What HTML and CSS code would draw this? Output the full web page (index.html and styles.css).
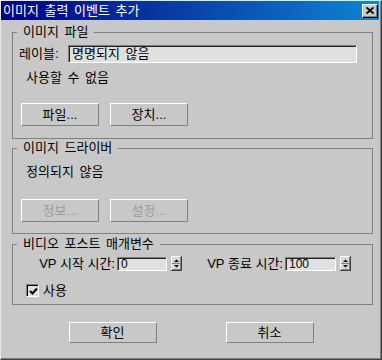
FILE: index.html
```html
<!DOCTYPE html>
<html lang="ko">
<head>
<meta charset="UTF-8">
<title>이미지 출력 이벤트 추가</title>
<link rel="stylesheet" href="styles.css">
</head>
<body>

<div class="win">
<div class="title">
  <span class="title-text">이미지 출력 이벤트 추가</span>
  <span class="close"><svg width="8" height="7" viewBox="0 0 8 7"><path d="M0.5 0.5l7 6M7.5 0.5l-7 6" stroke="#000" stroke-width="1.8"/></svg></span>
</div>

<fieldset class="grp g1">
  <legend>이미지 파일</legend>
  <div class="row-label"><span class="lbl">레이블:</span><div class="field name">명명되지 않음</div></div>
  <div class="note">사용할 수 없음</div>
  <div class="btns"><button class="btn">파일...</button><button class="btn">장치...</button></div>
</fieldset>

<fieldset class="grp g2">
  <legend>이미지 드라이버</legend>
  <div class="note note-drv">정의되지 않음</div>
  <div class="btns btns-drv"><button class="btn" disabled>정보...</button><button class="btn" disabled>설정...</button></div>
</fieldset>

<fieldset class="grp g3">
  <legend>비디오 포스트 매개변수</legend>
  <div class="vp">
    <span class="vlbl v-start">VP 시작 시간:</span><div class="field num num-start">0</div>
    <svg class="spin" width="11" height="15" viewBox="0 0 11 15"><rect x="0" y="0" width="11" height="15" fill="#404040"/><rect x="0" y="0" width="10" height="14" fill="#fff"/><rect x="1" y="1" width="9" height="13" fill="#808080"/><rect x="1" y="1" width="8" height="12" fill="#d8d8d8"/><rect x="1" y="7" width="9" height="1" fill="#808080"/><path d="M3 6h5L5.5 3.5z" fill="#000"/><path d="M3 9h5l-2.5 2.5z" fill="#000"/></svg>
    <span class="vlbl v-end">VP 종료 시간:</span><div class="field num num-end">100</div>
    <svg class="spin" width="11" height="15" viewBox="0 0 11 15"><rect x="0" y="0" width="11" height="15" fill="#404040"/><rect x="0" y="0" width="10" height="14" fill="#fff"/><rect x="1" y="1" width="9" height="13" fill="#808080"/><rect x="1" y="1" width="8" height="12" fill="#d8d8d8"/><rect x="1" y="7" width="9" height="1" fill="#808080"/><path d="M3 6h5L5.5 3.5z" fill="#000"/><path d="M3 9h5l-2.5 2.5z" fill="#000"/></svg>
  </div>
  <div class="chk-row">
    <span class="chk"><svg width="9" height="9" viewBox="0 0 9 9"><path d="M1 4l2.5 2.5L8 1.5" stroke="#000" stroke-width="2" fill="none"/></svg></span>
    <span>사용</span>
  </div>
</fieldset>

<div class="actions"><button class="btn big">확인</button><button class="btn big">취소</button></div>
</div>

</body>
</html>
```

FILE: styles.css
```css
html,body{margin:0;background:#c8c8c8}
body{font:13px/14px "Liberation Sans","Noto Sans CJK KR",sans-serif;word-spacing:2px;color:#000}
.win{width:382px;height:360px;box-sizing:border-box;background:#c8c8c8;border-top:1px solid #e8e8e8;border-left:1px solid #e8e8e8;border-right:1px solid #404040;border-bottom:1px solid #404040;box-shadow:inset -1px -1px #808080}
.title{height:19px;margin-right:2px;background:linear-gradient(90deg,#000080,#1084d0);display:flex;align-items:center;justify-content:space-between;padding-left:2px;color:#fff}
.close{width:16px;height:14px;box-sizing:border-box;background:#c8c8c8;border:1px solid;border-color:#fff #000 #000 #fff;box-shadow:inset -1px -1px #808080;margin-right:1px;display:flex;align-items:center;justify-content:center}
.close svg{display:block}

.grp{width:361px;box-sizing:border-box;margin:0 0 0 11px;padding:0 0 0 4px;border:1px solid #808080;min-width:0}
.grp legend{padding:0 6px;line-height:14px}
.g1{margin-top:5px;padding-bottom:12px}
.g2{margin-top:2px;padding-bottom:11px}
.g3{margin-top:3px;padding-bottom:7px}

.row-label{display:flex;align-items:center;margin-top:6px;height:18px;padding-left:2px}
.lbl{width:49px;flex:none}
.field{box-sizing:border-box;background:#e0e0e0;border:1px solid;border-color:#808080 #fff #fff #808080;box-shadow:inset 1px 1px #202020;flex:none}
.name{width:289px;height:18px;padding-left:3px;line-height:16px}
.note{margin:8px 0 0 9px}
.note-drv{margin-top:10px}

.btns{display:flex;gap:11px;margin:18px 0 0 4px}
.btns-drv{margin-top:20px}
.btn{width:78px;height:23px;box-sizing:border-box;padding:0;background:#c8c8c8;border:1px solid;border-color:#fff #808080 #808080 #fff;font:inherit;word-spacing:inherit;color:#000}
.btn:disabled{color:#9c9c9c}

.vp{display:flex;align-items:center;margin-top:5px;height:15px}
.vlbl{display:flex;justify-content:flex-end;padding-right:2px;box-sizing:border-box;white-space:nowrap;word-spacing:0;flex:none}
.v-start{width:82px;margin-left:18px}
.v-end{width:77px;margin-left:26px}
.num{height:14px;line-height:12px;padding-left:3px;font-size:12px}
.num-start{width:50px}
.num-end{width:51px}
.spin{display:block;margin-left:4px;flex:none}

.chk-row{display:flex;align-items:center;gap:4px;margin:13px 0 0 9px;height:13px}
.chk{width:13px;height:13px;box-sizing:border-box;background:#e0e0e0;border:1px solid;border-color:#808080 #fff #fff #808080;box-shadow:inset 1px 1px #000;display:flex;align-items:center;justify-content:center}
.chk svg{display:block;margin:1px 0 0 1px}

.actions{display:flex;justify-content:center;gap:69px;margin-top:17px}
.big{width:88px;height:21px}
```
